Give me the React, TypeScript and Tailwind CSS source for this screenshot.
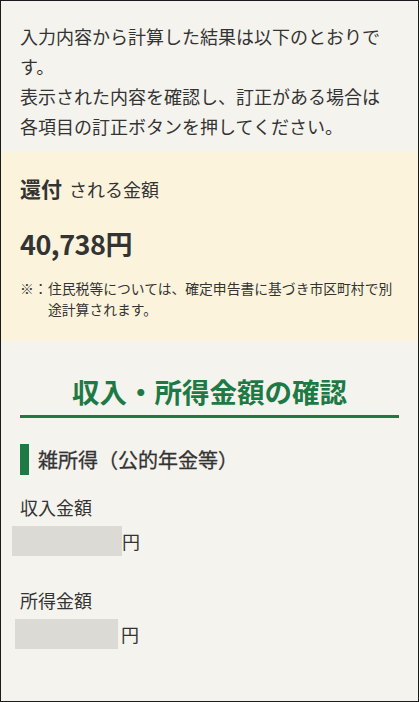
import React from "react";

const font = { fontFamily: '"Noto Sans CJK JP", "Noto Sans", sans-serif' };

export default function App() {
  return (
    <div
      style={font}
      className="w-[419px] h-[702px] box-border border border-[#1a1a1a] bg-[#f5f3ee] text-[#333333] overflow-hidden flex flex-col"
    >
      <div className="px-[19px] pt-[20px] text-[18px] leading-[30px]">
        <p>
          入力内容から計算した結果は以下のとおりで
          <br />
          す。
        </p>
        <p>
          表示された内容を確認し、訂正がある場合は
          <br />
          各項目の訂正ボタンを押してください。
        </p>
      </div>

      <div className="mt-[11px] bg-[#fbf3dc] px-[19px] pt-[22px] pb-[18px] h-[189px] box-border">
        <div className="flex items-baseline leading-[28px]">
          <span className="text-[21px] font-bold">還付</span>
          <span className="text-[18px] ml-[7px]">される金額</span>
        </div>
        <div className="mt-[23px] text-[27px] font-bold leading-[36px] tracking-[-0.5px]">40,738円</div>
        <div className="mt-[16px] flex text-[13.8px] leading-[21px]">
          <span className="shrink-0 w-[28px]">※：</span>
          <span>住民税等については、確定申告書に基づき市区町村で別途計算されます。</span>
        </div>
      </div>

      <div className="px-[19px]">
        <div className="mt-[30px] text-center text-[27.5px] font-bold text-[#1e7a45] leading-[40px]">
          収入・所得金額の確認
        </div>
        <div className="mt-[4px] h-[3px] bg-[#1e7a45]" />

        <div className="mt-[26px] flex items-center">
          <div className="w-[9px] h-[31px] bg-[#1e7a45]" />
          <div className="ml-[9px] text-[20px] font-normal leading-[31px] [-webkit-text-stroke:0.3px_#333333]">
            雑所得（公的年金等）
          </div>
        </div>

        <div className="mt-[17px] text-[18px] leading-[30px]">収入金額</div>
        <div className="mt-[4px] flex items-center -ml-[8px]">
          <div className="w-[110px] h-[30px] bg-[#dcdad5]" />
          <span className="text-[18px] leading-[30px]">円</span>
        </div>

        <div className="mt-[29px] text-[18px] leading-[30px]">所得金額</div>
        <div className="mt-[4px] flex items-center -ml-[5px]">
          <div className="w-[103px] h-[30px] bg-[#dcdad5]" />
          <span className="ml-[3px] text-[18px] leading-[30px]">円</span>
        </div>
      </div>
    </div>
  );
}
